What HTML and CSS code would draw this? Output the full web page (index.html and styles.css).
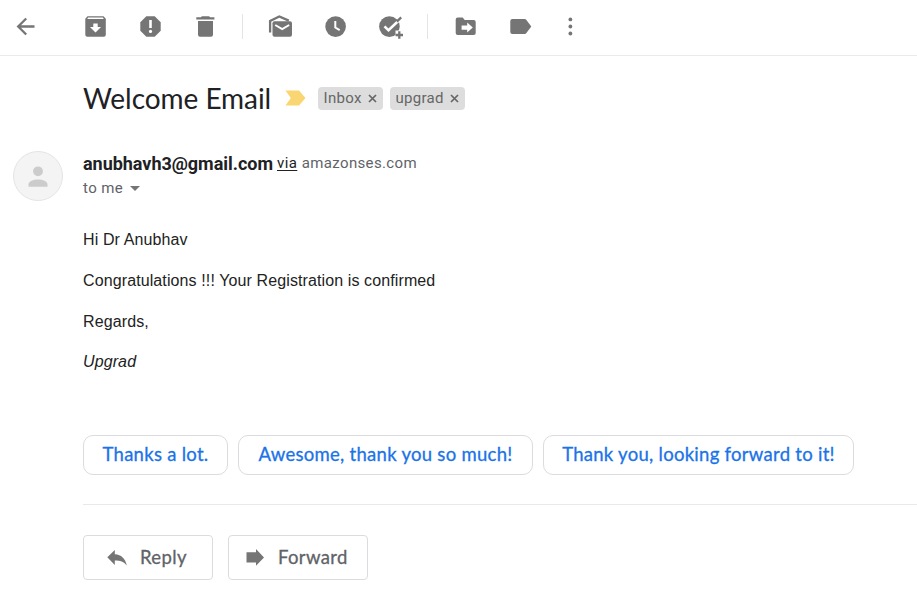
FILE: index.html
```html
<!DOCTYPE html>
<html lang="en">
<head>
<meta charset="utf-8">
<title>Welcome Email</title>
<link rel="stylesheet" href="styles.css">
</head>
<body>
<header class="toolbar">
  <svg class="icon back" viewBox="0 0 28 28"><path class="line" d="M22.500 13.500H6.500M14.200 5.500l-8 8 8 8"/></svg>
  <div class="group">
    <svg class="icon" viewBox="0 0 28 28"><path fill-rule="evenodd" d="M5.500 3.200h16l2.300 2.600v15.900a2 2 0 0 1-2 2H5.300a2 2 0 0 1-2-2V5.800zM6 4.600l-.7 1.300h16.400L21 4.600zM11.300 10.500V14H8l5.500 5.400L19 14h-3.300v-3.500z"/></svg>
    <svg class="icon" viewBox="0 0 28 28"><path d="M9.300 3.200h8.400l6 6v8.500l-6 6H9.300l-6-6V9.200z"/><path class="cut" d="M12.200 7h2.600v8h-2.600z"/><circle class="cut" cx="13.500" cy="18.400" r="1.600"/></svg>
    <svg class="icon" viewBox="0 0 28 28"><path d="M4.300 4.200h4.500l1.200-1h7l1.200 1h4.200v2.200H4.300zM6 8h15v13.700a2 2 0 0 1-2 2H8a2 2 0 0 1-2-2z"/></svg>
  </div>
  <div class="divider"></div>
  <div class="group">
    <svg class="icon" viewBox="0 0 28 28"><path class="line" d="M3.100 19.500V8L12.300 3.400l9.500 4.200"/><rect x="5.500" y="8.300" width="19.500" height="15.400" rx="2"/><path class="line cutline" d="M8.200 12l7 4.200 7-4.200"/></svg>
    <svg class="icon" viewBox="0 0 28 28"><circle cx="13.600" cy="13.600" r="10.300"/><path class="line cutline" d="M13.300 8v6.500l4.400 2.700"/></svg>
    <svg class="icon" viewBox="0 0 28 28"><circle cx="12.400" cy="13.600" r="10.300"/><path class="cut" d="M18.500 17.500H26v9h-7.500z"/><path class="line cutline wide" d="M7.500 13.300l4 4L25 4.500"/><path class="line" d="M19.800 8.600l4.400-4.200M22.300 18.300v7.500M18.500 22H26"/></svg>
  </div>
  <div class="divider"></div>
  <div class="group">
    <svg class="icon" viewBox="0 0 28 28"><path d="M5.700 4.500h5l2 2.500h9a2 2 0 0 1 2 2v11a2 2 0 0 1-2 2h-16a2 2 0 0 1-2-2V6.500a2 2 0 0 1 2-2z"/><path class="cut" d="M9.600 12.500h5.600V9.600l5.600 5-5.600 5v-2.900H9.600z"/></svg>
    <svg class="icon" viewBox="0 0 28 28"><path d="M5.300 6h12.400c.7 0 1.300.3 1.700.9l4.900 6.600-4.900 6.600c-.4.600-1 .9-1.700.9H5.300a2 2 0 0 1-2-2V8a2 2 0 0 1 2-2z"/></svg>
  </div>
  <svg class="icon more" viewBox="0 0 28 28"><circle cx="13.400" cy="6.400" r="1.900"/><circle cx="13.400" cy="13.500" r="1.900"/><circle cx="13.400" cy="20.500" r="1.900"/></svg>
</header>
<main>
  <div class="subject">
    <h1>Welcome Email</h1>
    <svg class="marker" viewBox="0 0 21 16"><path d="M.5 .5H14L20.500 8 14 15.500H.5L5.800 8z"/></svg>
    <span class="chip inbox">Inbox <svg viewBox="0 0 9 9"><path d="M1 1l7 7M8 1L1 8"/></svg></span>
    <span class="chip upgrad">upgrad <svg viewBox="0 0 9 9"><path d="M1 1l7 7M8 1L1 8"/></svg></span>
  </div>
  <div class="sender">
    <svg class="avatar" viewBox="0 0 50 50"><circle class="disc" cx="25" cy="25" r="24.500"/><circle cx="25" cy="20.300" r="4.900"/><path d="M15.500 35.800v-2.300c0-3.200 5-5 9.500-5s9.500 1.800 9.500 5v2.300z"/></svg>
    <div class="who">
      <div class="from"><b>anubhavh3@gmail.com</b><span class="via">via</span><span class="domain">amazonses.com</span></div>
      <div class="to">to me<svg viewBox="0 0 10 5"><path d="M0 0h10L5 5z"/></svg></div>
    </div>
  </div>
  <article class="body">
    <p>Hi Dr Anubhav</p>
    <p>Congratulations !!! Your Registration is confirmed</p>
    <p>Regards,</p>
    <p><i>Upgrad</i></p>
  </article>
  <div class="suggestions">
    <button class="s1"><span>Thanks a lot.</span></button>
    <button class="s2"><span>Awesome, thank you so much!</span></button>
    <button class="s3"><span>Thank you, looking forward to it!</span></button>
  </div>
  <div class="actions">
    <button class="reply"><svg viewBox="0 0 20 17"><path d="M.3 7.300L7.800 0v4.300c6.500.3 10.500 4.300 12 11.200-3-3.700-6.500-4.900-12-4.900v4.300z"/></svg><span>Reply</span></button>
    <button class="forward"><svg viewBox="0 0 20 17"><path d="M.5 3.300H10V0l8 8.400-8 8.300v-3.300H.5z"/></svg><span>Forward</span></button>
  </div>
</main>
</body>
</html>
```
FILE: styles.css
```css
* { box-sizing: border-box; }
body { margin: 0; background: #fff; color: #202124; font-family: Roboto, sans-serif; overflow: hidden; }
svg { display: block; flex: none; }
.toolbar { display: flex; height: 56px; padding: 13px 12px 0; border-bottom: 1px solid #e9ebeb; }
.icon { width: 28px; height: 28px; fill: #757575; }
.back { margin-right: 42px; }
.group { display: flex; gap: 27px; }
.divider { width: 1px; height: 25px; margin: 1px 24px 0 22px; background: #e2e5e6; }
.more { margin-left: 22px; }
.cut { fill: #fff; }
.line { fill: none; stroke: #757575; stroke-width: 2.300; }
.cutline { stroke: #fff; stroke-width: 2; }
.wide { stroke-width: 2.600; }

.subject { display: flex; align-items: center; height: 24px; margin: 30px 0 0 83px; }
h1 { flex: none; width: 188px; margin: 0 14px 0 0; font: 400 28px/34px Lato, sans-serif; letter-spacing: -.05px; white-space: nowrap; }
.marker { width: 21px; height: 16px; margin-right: 12px; fill: #f9d671; }
.chip { display: flex; align-items: center; justify-content: space-between; height: 23px; padding: 0 6px 0 5.500px; border-radius: 4px; background: #ddd; color: #666; font-size: 15px; line-height: 23px; letter-spacing: .3px; white-space: nowrap; }
.chip svg { width: 9px; height: 9px; stroke: #666; stroke-width: 1.700; }
.inbox { width: 65px; }
.upgrad { width: 75px; margin-left: 7px; }

.sender { display: flex; gap: 20px; margin: 41px 0 0 13px; }
.avatar { width: 50px; height: 50px; fill: #ccc; }
.disc { fill: #f4f4f4; stroke: #e4e4e4; }
.from { display: flex; height: 25px; line-height: 25px; font-size: 15px; letter-spacing: .4px; }
.from b { width: 194px; font-size: 18px; font-weight: 700; letter-spacing: -.03px; }
.via { color: #222; text-decoration: underline; text-underline-offset: 2px; }
.domain { margin-left: 4.500px; color: #5f6368; letter-spacing: .35px; }
.to { display: flex; align-items: center; gap: 7px; height: 24px; color: #5f6368; font-size: 15px; letter-spacing: .4px; }
.to svg { width: 10px; height: 5px; fill: #757575; }

.body { margin: 29px 0 0 83px; color: #222; font: 16px/20px "Liberation Sans", sans-serif; letter-spacing: .11px; }
.body p { height: 20px; margin: 0 0 21px; }
.body p:last-child { margin-top: -1px; margin-bottom: 0; }

button { display: flex; align-items: center; justify-content: center; padding: 0; background: #fff; border: 1px solid #dadce0; white-space: nowrap; }
.suggestions { display: flex; gap: 10px; margin: 63px 0 0 83px; }
.suggestions button { height: 40px; padding-bottom: 3px; border-radius: 10px; color: #1a73e8; font: 400 18.500px/22px Lato, sans-serif; letter-spacing: .28px; -webkit-text-stroke: .3px #1a73e8; }
.s1 { width: 145px; }
.s2 { width: 295px; }
.s3 { width: 311px; }
.actions { display: flex; gap: 15px; margin: 29px 0 0 83px; padding-top: 30px; border-top: 1px solid #e8eaea; }
.actions button { height: 45px; padding-bottom: 1px; justify-content: flex-start; border-radius: 4px; color: #5f6368; font: 400 18.500px/22px Lato, sans-serif; letter-spacing: .35px; -webkit-text-stroke: .3px #5f6368; }
.actions svg { width: 20px; height: 17px; fill: #757575; }
.reply { width: 130px; }
.reply svg { margin: 2px 13px 0 23px; }
.forward { width: 140px; }
.forward svg { margin: 1px 12px 0 17px; }
```
